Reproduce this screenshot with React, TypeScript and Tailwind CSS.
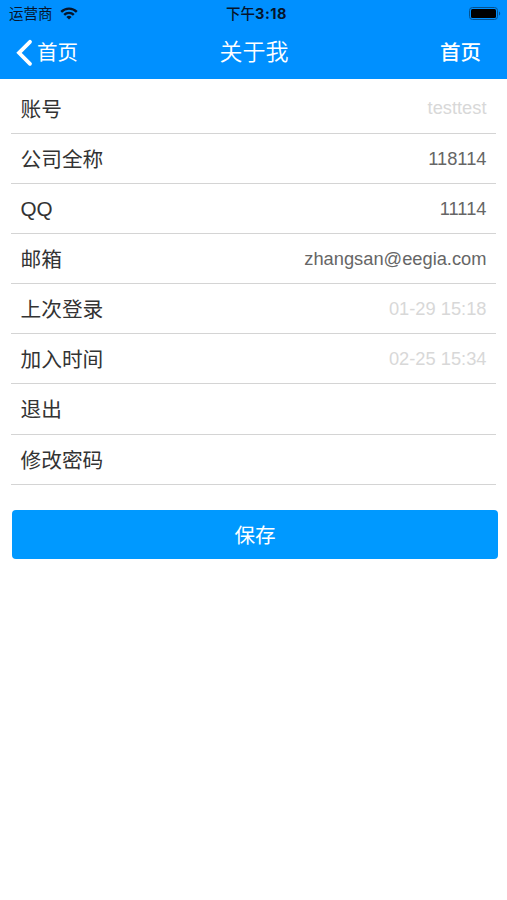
import clsx from 'clsx'

type Row = {
  label: string
  value?: string
  disabled?: boolean
}

const rows: Row[] = [
  { label: '账号', value: 'testtest', disabled: true },
  { label: '公司全称', value: '118114' },
  { label: 'QQ', value: '11114' },
  { label: '邮箱', value: 'zhangsan@eegia.com' },
  { label: '上次登录', value: '01-29 15:18', disabled: true },
  { label: '加入时间', value: '02-25 15:34', disabled: true },
  { label: '退出' },
  { label: '修改密码' },
]

function WifiIcon() {
  return (
    <svg width="18" height="13" viewBox="0 0 18 13" fill="none" stroke="#06152b" strokeWidth="2.4">
      <path d="M1.2 4.9a11 11 0 0 1 15.6 0" />
      <path d="M4.2 7.9a6.8 6.8 0 0 1 9.6 0" />
      <path d="M9 12.6 6.4 10a3.7 3.7 0 0 1 5.2 0Z" fill="#06152b" stroke="none" />
    </svg>
  )
}

function BatteryIcon() {
  return (
    <svg width="32" height="13" viewBox="0 0 32 13">
      <rect x="0.5" y="0.5" width="28" height="12" rx="3" fill="none" stroke="#05528f" />
      <rect x="2" y="2" width="25" height="9" rx="1.5" fill="#000" />
      <path d="M30 4.5c1.6.6 1.6 3.4 0 4Z" fill="#05528f" />
    </svg>
  )
}

function StatusBar() {
  return (
    <div className="grid h-[27px] grid-cols-3 items-center pr-[6px] pl-[9px] text-[14.5px] text-[#06152b]">
      <div className="flex items-center gap-[7px]">
        <span className="pt-[2px]">运营商</span>
        <WifiIcon />
      </div>
      <span className="pt-[2px] pl-[3px] text-center font-medium">
        下午<span className="font-['Inter'] text-[14.5px] font-bold tracking-[0.5px]">3:18</span>
      </span>
      <div className="flex justify-end">
        <BatteryIcon />
      </div>
    </div>
  )
}

function NavBar() {
  return (
    <nav className="grid h-[52px] grid-cols-3 items-center pr-[26px] pl-4 text-[20.5px] text-white">
      <button className="flex items-center gap-1">
        <svg
          width="17"
          height="28"
          viewBox="0 0 17 28"
          fill="none"
          stroke="currentColor"
          strokeWidth="3.8"
          strokeLinecap="round"
        >
          <path d="M14 2.8 3 13.8l11 11" />
        </svg>
        <span className="pt-px">首页</span>
      </button>
      <h1 className="pb-[2px] pl-[11px] text-center text-[23px] font-[350]">关于我</h1>
      <button className="pt-px text-right font-medium">首页</button>
    </nav>
  )
}

export default function App() {
  return (
    <div className="min-h-screen bg-white font-['Liberation_Sans','Noto_Sans_CJK_SC',sans-serif]">
      <header className="h-[79px] bg-[#0090ff]">
        <StatusBar />
        <NavBar />
      </header>

      <main className="pt-[4.6px] pr-[9px] pl-3">
        <ul className="mr-[2px] -ml-px">
          {rows.map((row) => (
            <li
              key={row.label}
              className="flex h-[50.15px] items-center justify-between border-b border-[#d4d4d4] px-[9.5px]"
            >
              <span className={clsx('text-[20.7px] text-[#333]', row.label !== 'QQ' && 'pt-[2px]')}>
                {row.label}
              </span>
              <span className={clsx('text-[18.3px]', row.disabled ? 'text-[#d8d8d8]' : 'text-[#666]')}>
                {row.value}
              </span>
            </li>
          ))}
        </ul>

        <button className="mt-[25.4px] h-[49px] w-full rounded-[4px] bg-[#0099ff] pt-[3px] text-[20.6px] text-white">
          保存
        </button>
      </main>
    </div>
  )
}
